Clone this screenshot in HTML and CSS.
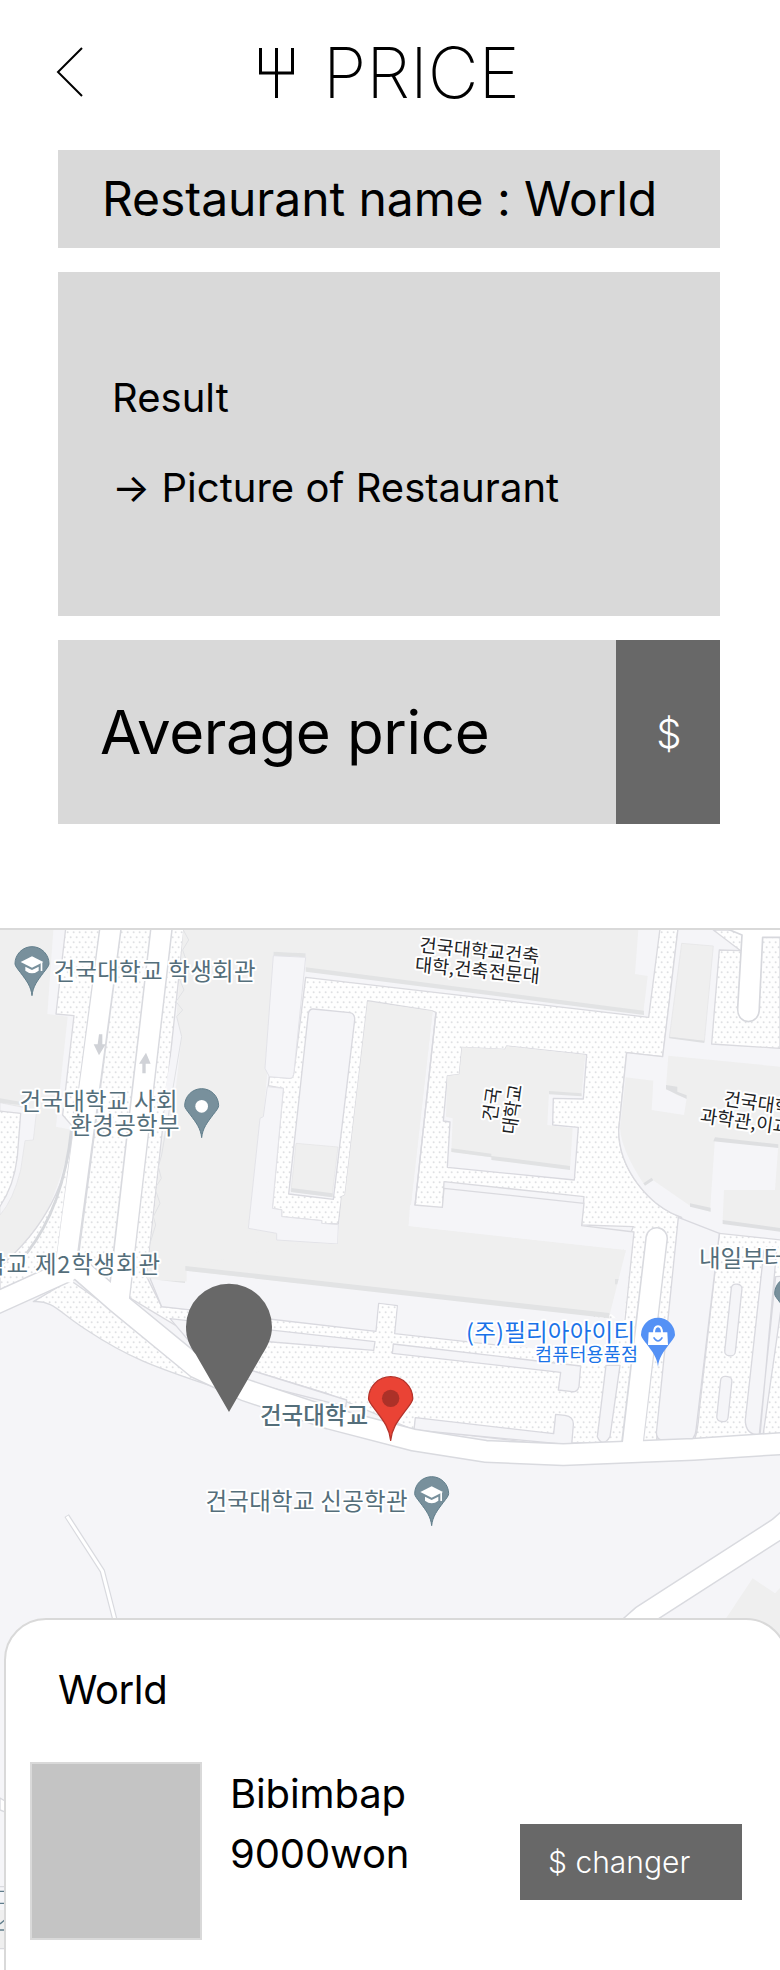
FILE: index.html
```html
<!DOCTYPE html>
<html lang="en">
<head>
<meta charset="utf-8">
<title>Price</title>
<link rel="stylesheet" href="styles.css">
</head>
<body>
<div class="screen">
  <header class="header">
    <svg class="back" width="28" height="50" viewBox="0 0 28 50"><path d="M26 1 2 25 26 49" fill="none" stroke="#000" stroke-width="2"/></svg>
    <svg class="fork" width="38" height="51" viewBox="0 0 38 51"><path d="M3.500 1V26H35.500V1M19.500 1V51" fill="none" stroke="#000" stroke-width="3"/></svg>
    <h1 class="title">PRICE</h1>
  </header>
  <main class="cards">
    <section class="card name">Restaurant name : World</section>
    <section class="card picture"><p>Result</p><p>→ Picture of Restaurant</p></section>
    <section class="card price"><span class="price-label">Average price</span><button class="dollar">$</button></section>
  </main>
  <div class="map">
    <svg class="map-art" width="780" height="1040" viewBox="0 930 780 1040">
      <defs>
        <pattern id="dots" width="18" height="30" patternUnits="userSpaceOnUse"><rect width="18" height="30" fill="#fefefe"/><circle cx="5" cy="7" r="2.900" fill="#dfe0e3"/><circle cx="14" cy="22" r="2.900" fill="#dfe0e3"/></pattern>
        <path id="pin" d="M0 0C-2-19-11-30-23-46C-30-55-34-60-34-64A34 34 0 0 1 34-64C34-60 30-55 23-46C11-30 2-19 0 0Z" transform="scale(1.500)"/>
        <g id="cap" fill="#fff"><path d="M-34-94 0-111 34-94 0-77Z"/><path d="M-20-80 0-70 20-80V-68Q0-52-20-68Z"/><path d="M26-94h5v27h-5Z"/></g>
      </defs>
      <g transform="translate(0 910) scale(.33333)" stroke-linejoin="round">
        <!-- Ground and blocks -->
        <rect y="60" width="2340" height="3120" fill="#f5f5f8"/>
        <g fill="#efefef">
          <path d="M0 60H160L142 312 203 320 180 535 168 650 218 660Q190 820 85 1020L0 1070Z"/>
          <path d="M550 60H1915L1905 192 1943 198 1930 308 917 180V130L820 125 795 475 802 480 790 620 780 625 745 955 830 970V990L1015 1002 1025 860 1035 855 1103 270 1298 303 1225 948 1878 1020 1869 1120 1850 1115 1830 1220 560 1070 555 1115 465 1110 450 1090 485 710 530 490 545 380 530 320Z"/>
        </g>
        <path d="M0 578 110 600 100 690 75 692 62 780Q40 870 0 915Z" fill="#f5f5f8" stroke="#e3e3e6" stroke-width="2"/>
        <path d="M-4 603 62 610 52 740Q42 830-4 895Z" fill="url(#dots)" stroke="#dadadf" stroke-width="4"/>
        <path d="M917 172 1932 302V315L917 185Z" fill="#e2e3e4"/>
        <path d="M820 125 917 130V142L820 137ZM465 1100 555 1112V1122L465 1112ZM0 565 60 575V585L0 578Z" fill="#e2e3e4"/>
        <g fill="url(#dots)" stroke="#dadadf" stroke-width="4">
          <path d="M197 56H552L440 1100 485 1190 1420 1285 1640 1300 1740 1320 1900 950 1745 945 1752 860 1332 815 1327 912 1243 905 1308 307 1298 303 1103 272 1035 855 1025 860 1015 942 965 940V932L845 920V900L817 895 850 535 805 527 808 500 870 505Q880 505 882 485L917 202 1946 322 1980 56H2034L1988 440 1880 428 1856 660C1856 780 1950 890 2045 922L2030 1120 1970 1597H1865L1610 1600 1230 1555 980 1450 750 1380 383 1160 320 1110 0 1220V1070Q200 900 218 650L188 615 222 317 168 312Z"/>
        </g>
        <path d="M80 1030Q190 890 214 660" fill="none" stroke="#d6d8dc" stroke-width="8"/>
        <path d="M550 60 530 320 545 380 485 710 440 1105 465 1110 900 1130 830 970 745 955 780 625 790 620 802 480 795 475 820 125V60Z" fill="#efefef"/>
        <path d="M530 340 545 380 528 530 490 670 497 530Z" fill="#f5f5f8"/>
        <path d="M820 137 917 142 882 485Q880 505 870 505L808 500 795 475ZM802 530 850 535 817 895 845 900V920L965 932V940L1015 944 1013 1002 830 990V970L745 955 780 625 790 620Z" fill="#f5f5f8" stroke="#e3e3e8" stroke-width="3"/>
        <path d="M550 60 566 90 548 120 560 155 535 200 552 240 528 275 548 300 530 320 545 380 490 705 485 735 475 770 484 805 465 835 480 880 460 920 467 945 450 1000" fill="none" stroke="#e1e2e5" stroke-width="3"/>
        <path d="M925 310Q928 296 940 297L1050 308Q1065 311 1064 330L1000 868 866 852Z" fill="#f5f5f8" stroke="#d9d9df" stroke-width="4"/>
        <path d="M888 700 1014 711 996 860 873 844Z" fill="#efefef" stroke="#e4e4e6" stroke-width="2"/><path d="M874 834 998 850V862L873 846Z" fill="#e0e1e3"/>
        <path d="M1103 275 1298 303 1226 948 1300 957 1878 1020 1869 1120 1830 1215 560 1070 900 1000 1013 1002 1025 860 1035 855Z" fill="#efefef"/>
        <path d="M1845 1107h26v16h-26Z" fill="#e2e3e4"/>
        <path d="M1308 307 1243 905" fill="none" stroke="#d9d9df" stroke-width="4"/>
        <path d="M1243 885 1327 890 1332 835 1752 880 1745 945 1902 966 1870 1240 1830 1210 1878 1020 1226 948 1230 885Z" fill="#f5f5f8"/>
        <path d="M1243 885 1327 892 1332 835 1752 880 1745 947 1902 966 1875 1230" fill="none" stroke="#dadadf" stroke-width="4"/>
        <!-- Central block -->
        <path d="M1386 412 1515 418 1520 408 1760 434 1750 567 1660 565 1658 645 1735 652 1723 810 1342 772 1350 636 1330 633 1342 498 1378 493Z" fill="#f5f5f8" stroke="#d9d9df" stroke-width="4"/>
        <path d="M1386 412 1515 418 1520 408 1756 434 1745 550 1647 546 1642 645 1718 655 1710 778 1474 742 1354 725 1358 625 1338 620 1342 498 1378 493Z" fill="#efefef"/>
        <path d="M1647 543 1745 550V559L1647 553ZM1354 715 1474 731V738L1710 768V780L1474 750V742L1354 726Z" fill="#e1e2e3"/>
        <!-- Eastern blocks -->
        <path d="M2034 56 1988 440 1880 428 1856 660C1856 780 1950 890 2045 922L2030 1040 1970 1597 2090 1592 2150 980 2340 1000V56Z" fill="#f5f5f8"/>
        <path d="M2034 56 1988 440 1880 428 1856 660C1856 780 1950 890 2045 922L1970 1590" fill="none" stroke="#dadadf" stroke-width="4"/>
        <path d="M2158 120 2222 122 2140 60H2340V415L2135 402Z" fill="url(#dots)" stroke="#dadadf" stroke-width="4"/>
        <path d="M2180 56 2226 75 2213 295C2211 348 2279 348 2278 295L2288 82H2344V56Z" fill="#fff" stroke="#d7d8dd" stroke-width="5"/>
        <g fill="#efefef">
          <path d="M2045 100 2140 108 2113 395 2008 382Z" stroke="#e4e4e6" stroke-width="2"/>
          <path d="M2005 437 2340 470V705L2145 685 2130 905 2070 887 1955 808 1930 820Q1864 720 1860 655L1877 502 1960 512 1955 600 2052 615 2060 565 2030 555 1998 532Z"/>
          <path d="M2168 930 2172 840 2325 840 2335 705H2340V960Z"/>
        </g>
        <path d="M2145 682 2335 703V714L2140 694ZM2168 930 2340 954V965L2168 942ZM1930 820 1955 803 1960 811 1935 827ZM2070 880 2132 893V905L2070 890ZM1998 525 2032 530V545L2060 556V567L1998 538ZM2008 380 2113 392V399L2008 385Z" fill="#dedfe1"/>
        <!-- Parking strips -->
        <path d="M2158 970 2344 990V1570L2080 1595Q2093 1575 2098 1500Z" fill="url(#dots)" stroke="#dadadf" stroke-width="4"/>
        <g fill="#f5f5f8" stroke="#d9d9df" stroke-width="4">
          <path d="M2035 922 2158 970 2088 1560Q2085 1592 2060 1592H1995Q1965 1592 1970 1560Z"/>
          <path d="M2292 1020H2330L2280 1575Q2236 1575 2236 1530ZM2327 1100 2344 1099 2344 1190 2290 1570 2278 1572Z"/>
          <rect x="-16" y="-108" width="32" height="216" rx="14" transform="translate(2200 1230) rotate(6)"/>
          <rect x="-17" y="-68" width="34" height="136" rx="14" transform="translate(2173 1467) rotate(6)"/>
          <path d="M1818 1366H1860L1830 1580Q1808 1615 1792 1580Z"/>
          <path d="M510 1226 1125 1295 1121 1321 560 1275 590 1320Z"/>
          <path d="M1180 1302 1742 1368 1737 1430Q1732 1450 1710 1444L1675 1440 1682 1387 1177 1330Z"/>
          <path d="M750 1380 1040 1470 1037 1490 700 1405ZM1246 1523 1661 1571 1667 1513 1695 1516Q1722 1520 1720 1545L1715 1605 1242 1560Z"/>
          <path d="M485 1190 1128 1265 1136 1180 1192 1187 1184 1270 1840 1340 1870 1225 1820 1225 560 1082V1120L450 1107Z" stroke="none"/>
          <path d="M450 1105 485 1190 1128 1264 1136 1180 1192 1187 1184 1271 1500 1306" fill="none"/>
        </g>
        <path d="M1138 1182 1190 1189 1181 1274 1130 1268Z" fill="url(#dots)"/>
        <path d="M556 1068 1828 1209V1225L556 1082Z" fill="#e2e3e4"/>
        <!-- Roads -->
        <g fill="none" stroke="#d9dadf" stroke-width="68"><path d="M332 50 190 1140M485 50 357 1160"/><path d="M1970 985 1896 1610" stroke-linecap="round"/></g>
        <path d="M0 1188 210 1068 350 1175 590 1372 735 1440 990 1525 1240 1590 1455 1624 1690 1634 2080 1618 2340 1600V2300H0Z" fill="#f5f5f8"/>
        <path d="M100 1175C160 1170 180 1210 260 1260 380 1340 460 1370 640 1430L560 1375 330 1195 210 1110Z" fill="url(#dots)" stroke="#d9dadf" stroke-width="4"/>
        <path d="M-20 1183 230 1070 350 1175 590 1372 735 1440 990 1525 1240 1590 1455 1624 1690 1634 2080 1618 2360 1600" fill="none" stroke="#d9dadf" stroke-width="70"/>
        <path d="M-20 1183 230 1070 350 1175 590 1372 735 1440 990 1525 1240 1590 1455 1624 1690 1634 2080 1618 2360 1600" fill="none" stroke="#fff" stroke-width="61"/>
        <g fill="none" stroke="#fff" stroke-width="59"><path d="M332 50 190 1115M485 50 357 1165"/><path d="M1970 985 1896 1620" stroke-linecap="round"/></g>
        <path d="M1892 2150 1928 2118 2335 1856 2370 1826" fill="none" stroke="#d9dadf" stroke-width="70"/><path d="M1892 2150 1928 2118 2335 1856 2370 1826" fill="none" stroke="#fff" stroke-width="61"/>
        <path d="M2258 2005 2325 2050 2340 2034V2250H2170L2175 2130Z" fill="#efefef"/>
        <path d="M200 1817 307 1983 350 2150" fill="none" stroke="#d9dadf" stroke-width="16"/><path d="M201 1819 307 1983 350 2150" fill="none" stroke="#fff" stroke-width="9"/>
        <!-- Sliver of map left of the sheet -->
        <path d="M0 2664 20 2676V2708L0 2700Z" fill="#fff" stroke="#d9dadf" stroke-width="4"/>
        <path d="M0 3000h20v114H0Z" fill="#efefef"/><path d="M0 3118h20v62H0Z" fill="#fff"/>
        <path d="M0 2930H20M0 3116H20" stroke="#d9dadf" stroke-width="4"/>
        <path d="M0 2944H14M0 2980H14M0 3060H14M0 3042 14 3030" stroke="#607d8b" stroke-width="4"/>
        <g fill="#d0d2d7"><path d="M297 373h10v30h10l-20 33-16-33h12Z"/><path d="M427 490h10v-29h15l-14-33-21 33h10Z"/></g>
        <!-- Map pins -->
        <g fill="#78909c" stroke="#607d8b" stroke-width="2">
          <use href="#pin" transform="translate(96 257)"/><use href="#pin" transform="translate(605 683)"/><use href="#pin" transform="translate(1295 1847)"/><use href="#pin" transform="translate(2375 1247)"/>
        </g>
        <use href="#pin" transform="translate(1974 1370)" fill="#5491f5"/>
        <use href="#cap" transform="translate(96 250)"/><use href="#cap" transform="translate(1295 1840)"/>
        <circle cx="605" cy="589" r="19" fill="#fff"/>
        <path d="M1946 1267h56l2 38h-60Z" fill="#fff"/><path d="M1962 1270c0-28 24-28 24 0" fill="none" stroke="#fff" stroke-width="6"/><path d="M1961 1282q13 22 26 0" fill="none" stroke="#5491f5" stroke-width="5"/>
        <use href="#pin" transform="translate(1172 1591) scale(1.300)" fill="#ea4335" stroke="#b4322a" stroke-width="2"/>
        <circle cx="1172" cy="1465" r="26" fill="#ac3128"/>
        <path d="M687 1506 587 1333C568 1307 558 1283 558 1250A129 129 0 0 1 816 1250C816 1283 803 1307 787 1333Z" fill="#686868"/>
      </g>
      <g class="labels">
        <text x="53.500" y="980" textLength="202">건국대학교 학생회관</text>
        <text x="19.500" y="1110" textLength="158">건국대학교 사회</text>
        <text x="70.500" y="1134" textLength="109">환경공학부</text>
        <text x="-16" y="1273" textLength="176">학교 제2학생회관</text>
        <text x="260" y="1424" textLength="108" class="strong">건국대학교</text>
        <text x="205.500" y="1510" textLength="202">건국대학교 신공학관</text>
        <text x="699" y="1267">내일부터</text>
        <text x="466" y="1341" textLength="169" class="blue">(주)필리아아이티</text>
        <text x="535" y="1361" textLength="103" class="blue small">컴퓨터용품점</text>
        <g class="dark">
          <text transform="translate(419 951.500) rotate(5.500)" textLength="120">건국대학교건축</text>
          <text transform="translate(414.500 971) rotate(5.500)" textLength="125">대학,건축전문대</text>
          <text transform="translate(496 1122) rotate(-82)" textLength="34">건국</text>
          <text transform="translate(515.500 1135) rotate(-82)" textLength="50">대학교</text>
          <text transform="translate(723 1105) rotate(8)">건국대학교</text>
          <text transform="translate(699.500 1122) rotate(8)">과학관,이과대</text>
        </g>
      </g>
    </svg>
    <section class="sheet">
      <h2 class="place">World</h2>
      <div class="item"><div class="thumb"></div><p class="dish">Bibimbap<br>9000won</p><button class="changer">$ changer</button></div>
    </section>
  </div>
</div>
</body>
</html>
```
FILE: styles.css
```css
* { box-sizing: border-box; }
body { margin: 0; background: #fff; color: #000; font-family: Inter, "Noto Sans CJK KR", sans-serif; }
h1, h2, p { margin: 0; font-weight: 400; }
button { border: 0; padding: 0; font: inherit; color: #fff; background: #686868; }
.screen { width: 780px; height: 1970px; overflow: hidden; display: flex; flex-direction: column; }
.header { height: 150px; padding-left: 56px; display: flex; align-items: flex-start; flex: none; }
.back { margin-top: 47px; }
.fork { margin: 47px 0 0 173px; }
.title { margin: 30px 0 0 28px; font-size: 70px; line-height: 85px; font-weight: 200; white-space: nowrap; }
.cards { width: 662px; margin-left: 58px; display: flex; flex-direction: column; gap: 24px; flex: none; }
.card { background: #d9d9d9; white-space: nowrap; }
.name { height: 98px; padding-left: 44px; font-size: 48px; line-height: 97px; letter-spacing: -.08px; }
.picture { height: 344px; padding: 81px 0 0 54px; font-size: 40px; line-height: 90px; letter-spacing: .03px; }
.price { height: 184px; display: flex; align-items: stretch; }
.price-label { flex: 1; padding-left: 42px; font-size: 60px; line-height: 184px; letter-spacing: -.35px; }
.dollar { width: 104px; font-size: 40px; font-weight: 350; padding: 2px 0 0 2px; }
.map { margin-top: 104px; height: 1042px; border-top: 2px solid #d9d9d9; display: grid; overflow: hidden; flex: none; }
.map-art { grid-area: 1 / 1; display: block; }
.labels { font-family: "Noto Sans CJK KR", sans-serif; font-size: 23.500px; fill: #546e7a; stroke: #fff; stroke-width: 4px; paint-order: stroke; stroke-linejoin: round; }
.strong { font-weight: 500; }
.blue { fill: #1a73e8; }
.small { font-size: 18.500px; }
.dark { fill: #202124; font-size: 18.500px; }
.sheet { grid-area: 1 / 1; margin: 688px 0 0 4px; width: 784px; height: 380px; border: 2px solid #d9d9d9; border-radius: 42px 42px 0 0; background: #fff; }
.place { padding: 46px 0 0 52px; font-size: 40px; line-height: 48px; letter-spacing: -.4px; }
.item { display: flex; margin: 48px 0 0 24px; }
.thumb { width: 172px; height: 178px; border: 2px solid #d9d9d9; background: #c4c4c4; }
.dish { width: 289px; padding: 2px 0 0 28px; font-size: 40px; line-height: 60px; letter-spacing: -.12px; }
.changer { margin: 62px 0 0 29px; width: 222px; height: 76px; padding: 0 0 1px 28px; font-size: 30px; font-weight: 350; text-align: left; }
```
